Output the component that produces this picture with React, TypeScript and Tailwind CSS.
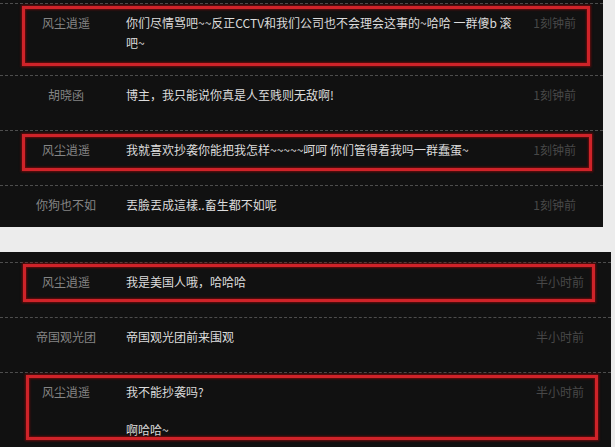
import React from "react";

type Row = {
  name: string;
  lines: string[];
  time: string;
  box?: { top: number; left: number; width: number; height: number };
  leading?: string;
};

const top: Row[] = [
  {
    name: "风尘逍遥",
    lines: ["你们尽情骂吧~~反正CCTV和我们公司也不会理会这事的~哈哈 一群傻b 滚", "吧~"],
    time: "1刻钟前",
    box: { top: 2, left: 22, width: 568, height: 60 },
  },
  { name: "胡晓函", lines: ["博主，我只能说你真是人至贱则无敌啊!"], time: "1刻钟前" },
  {
    name: "风尘逍遥",
    lines: ["我就喜欢抄袭你能把我怎样~~~~~呵呵 你们管得着我吗一群蠢蛋~"],
    time: "1刻钟前",
    box: { top: 3, left: 22, width: 570, height: 37 },
  },
  { name: "你狗也不如", lines: ["丟臉丟成這樣..畜生都不如呢"], time: "1刻钟前" },
];

const bottom: Row[] = [
  {
    name: "风尘逍遥",
    lines: ["我是美国人哦，哈哈哈"],
    time: "半小时前",
    box: { top: 1, left: 23, width: 572, height: 38 },
  },
  { name: "帝国观光团", lines: ["帝国观光团前来围观"], time: "半小时前" },
  {
    name: "风尘逍遥",
    lines: ["我不能抄袭吗?", "\u00a0", "啊哈哈~"],
    time: "半小时前",
    box: { top: 2, left: 26, width: 572, height: 65 },
    leading: "leading-[19px]",
  },
];

function CommentRow({ r }: { r: Row }) {
  const lh = r.leading ?? "leading-[20px]";
  return (
    <div className={`relative flex min-h-[55px] border-t border-dashed border-[#4d4d4d] pt-[9px] pb-[22px] ${lh}`}>
      <div className="ml-[16px] w-[100px] shrink-0 text-center text-[#858585]">{r.name}</div>
      <div className="ml-[10px] flex-1 text-[#dcdcdc]">
        {r.lines.map((l, i) => (
          <div key={i}>{l}</div>
        ))}
      </div>
      <div className="w-[60px] shrink-0 pr-[27px] text-right text-[#484848] whitespace-nowrap box-content">{r.time}</div>
      {r.box && (
        <div
          className="pointer-events-none absolute border-[3px] border-[#cf2329] shadow-[0_0_2px_1px_rgba(120,10,10,0.85),inset_0_0_2px_1px_rgba(120,10,10,0.8)]"
          style={{ top: r.box.top, left: r.box.left, width: r.box.width, height: r.box.height }}
        />
      )}
    </div>
  );
}

export default function App() {
  return (
    <div
      className="h-[447px] w-[615px] overflow-hidden bg-[#ececec] text-[12px]"
      style={{ fontFamily: '"Noto Sans CJK SC", "Noto Sans", sans-serif' }}
    >
      <div className="h-[227px] w-[603px] overflow-hidden bg-[#111111] pt-[3px]">
        {top.map((r, i) => (
          <CommentRow key={i} r={r} />
        ))}
      </div>
      <div className="mt-[25px] h-[195px] w-[611px] overflow-hidden bg-[#111111] pt-[10px]">
        {bottom.map((r, i) => (
          <CommentRow key={i} r={r} />
        ))}
      </div>
    </div>
  );
}
